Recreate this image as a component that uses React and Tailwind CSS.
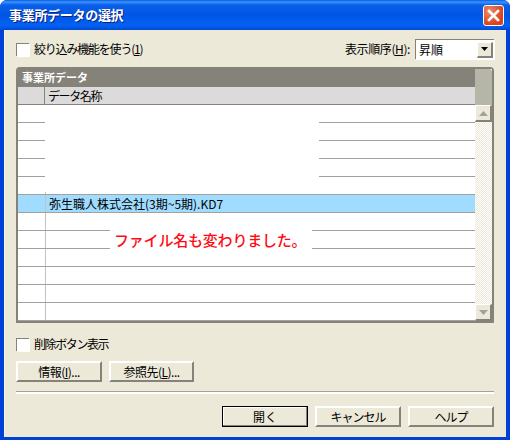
import React from 'react'

const jp = "font-['Noto_Sans_CJK_JP','Liberation_Sans',sans-serif]"

function Checkbox({ label, u, className = "", textClass = "" }) {
  return (
    <div className={"flex items-center gap-[5px] " + className}>
      <div className="w-[13px] h-[13px] bg-white border-t border-l border-[#85827a] shadow-[1px_1px_0_#fff]"></div>
      <span className={textClass}>{label}{u}</span>
    </div>
  )
}

function Btn({ children, w = "w-[86px]", focus, textClass = "" }) {
  return (
    <button className={w + " h-[21px] flex items-center justify-center bg-[#ece9d8] text-[12px] " + textClass + " " + (focus
      ? "border border-black shadow-[inset_-1px_-1px_0_#85827a,inset_1px_1px_0_#fff]"
      : "border-t-2 border-l-2 border-b-2 border-r-2 border-t-white border-l-white border-b-[#85827a] border-r-[#85827a]")}>
      {children}
    </button>
  )
}

function Row({ blue, text }) {
  return (
    <div className={"flex h-[18px] shrink-0 border-b border-[#a3a19b] " + (blue ? "bg-[#a0dcff]" : "bg-white")}>
      <div className="w-[27px] shrink-0"></div>
      <div className="flex-1 border-l border-[#c4c2bd] pl-[3px] text-[12px] leading-[17px] whitespace-nowrap">{text}</div>
    </div>
  )
}

function ScrollArrow({ down }) {
  return (
    <div className="h-[17px] shrink-0 flex items-center justify-center bg-[#ece9d8] border-t border-l border-t-white border-l-white border-b-2 border-r-2 border-b-[#85827a] border-r-[#85827a]">
      <svg width="9" height="5" viewBox="0 0 9 5" className="fill-[#a3a19b]">
        <path d={down ? "M0 0h9L4.5 5z" : "M4.5 0L9 5H0z"} />
      </svg>
    </div>
  )
}

export default function App() {
  const rows = Array.from({ length: 12 })
  return (
    <div className={"w-[510px] h-[440px] flex flex-col bg-[#0041d8] rounded-t-[7px] overflow-hidden text-black text-[12px] " + jp}>
      {/* title bar */}
      <div className="h-[30px] shrink-0 flex items-center justify-between pl-[9px] pr-[6px] bg-[linear-gradient(180deg,#0a5ce0_0,#3a93ff_2px,#0a5fe8_5px,#0055e5_50%,#0361f2_85%,#0049d0_100%)]">
        <span className="text-white font-bold text-[13px] tracking-[-0.3px] [text-shadow:1px_1px_0_#0a1f80]">事業所データの選択</span>
        <div className="w-[21px] h-[21px] rounded-[3px] border border-white bg-[radial-gradient(circle_at_30%_30%,#ee8a6a,#d8431c_70%)] flex items-center justify-center">
          <svg width="13" height="13" viewBox="0 0 13 13" className="stroke-white" strokeWidth="2.6" strokeLinecap="square">
            <path d="M2 2l9 9M11 2l-9 9" />
          </svg>
        </div>
      </div>

      {/* dialog body */}
      <div className="flex-1 mx-[4px] mb-[3px] bg-[#ece9d8] pl-[11px] pr-[12px] flex flex-col border-l border-[#f5f3e8]">
        <div className="h-[37px] flex items-center justify-between shrink-0 pt-[1px]">
          <Checkbox label="絞り込み機能を使う" u={<>(<span className="underline">1</span>)</>} textClass="tracking-[-1.2px]" />
          <div className="flex items-center gap-[5px]">
            <span className="tracking-[-0.4px]">表示順序(<span className="underline">H</span>):</span>
            <div className="w-[79px] h-[20px] bg-white border-t border-l border-[#85827a] flex items-center justify-between pl-[3px] pr-[1px] shadow-[1px_1px_0_#fff]">
              <span className="text-[12px]">昇順</span>
              <div className="w-[16px] h-[16px] bg-[#ece9d8] flex items-center justify-center border-t border-l border-t-white border-l-white border-b-2 border-r-2 border-b-[#85827a] border-r-[#85827a]">
                <svg width="7" height="4" viewBox="0 0 7 4" className="fill-black"><path d="M0 0h7L3.5 4z" /></svg>
              </div>
            </div>
          </div>
        </div>

        {/* table panel */}
        <div className="h-[256px] shrink-0 flex flex-col bg-[#85827a] rounded-t-[4px] rounded-br-[1px] pl-[2px] pr-[2px] pb-[2px]">
          <div className="h-[20px] shrink-0 flex items-center pl-[4px] text-white font-bold text-[11px] leading-none">事業所データ</div>
          <div className="flex-1 flex min-h-0 -mt-[18px]">
            <div className="flex-1 flex flex-col mt-[18px]">
              <div className="flex h-[18px] shrink-0 bg-[#dcdadb] border-b border-[#85827a]">
                <div className="w-[27px] shrink-0 border-r border-[#85827a]"></div>
                <div className="pl-[3px] text-[12px] leading-[17px] tracking-[-1.4px]">データ名称</div>
              </div>
              <div className="relative flex-1 bg-white overflow-hidden">
                {rows.map((_, i) => (
                  <Row key={i} blue={i === 5} text={i === 5 ? "弥生職人株式会社(3期~5期).KD7" : ""} />
                ))}
                {/* masked out area in the screenshot */}
                <div className="absolute top-0 left-[27px] w-[274px] h-[87px] bg-white"></div>
                <div className="absolute top-[120px] left-[92px] w-[202px] h-[30px] bg-white flex items-center pl-[4px] text-[15px] tracking-[-0.2px] font-medium text-[#ff0a14] whitespace-nowrap">ファイル名も変わりました。</div>
              </div>
            </div>
            {/* scrollbar */}
            <div className="w-[17px] shrink-0 flex flex-col bg-[repeating-conic-gradient(#ece9d8_0_25%,#fff_0_50%)] bg-[length:2px_2px]">
              <div className="h-[36px] shrink-0 bg-[#b5b5a8] rounded-tr-[3px]"></div>
              <ScrollArrow />
              <div className="flex-1"></div>
              <ScrollArrow down />
            </div>
          </div>
        </div>

        <Checkbox label="削除ボタン表示" className="mt-[14px] h-[14px]" textClass="tracking-[-1.4px]" />
        <div className="flex gap-[7px] mt-[10px]">
          <Btn textClass="tracking-[-0.5px]">情報(<span className="underline">I</span>)...</Btn>
          <Btn w="w-[85px]" textClass="tracking-[-0.5px]">参照先(<span className="underline">L</span>)...</Btn>
        </div>
        <div className="h-[3px] mt-[9px] shrink-0 border-t border-[#a3a19b] border-b-2 border-b-white"></div>
        <div className="flex justify-end gap-[7px] mt-[12px]">
          <Btn focus>開く</Btn>
          <Btn textClass="tracking-[-1px]">キャンセル</Btn>
          <Btn textClass="tracking-[-1px]">ヘルプ</Btn>
        </div>
      </div>
    </div>
  )
}
